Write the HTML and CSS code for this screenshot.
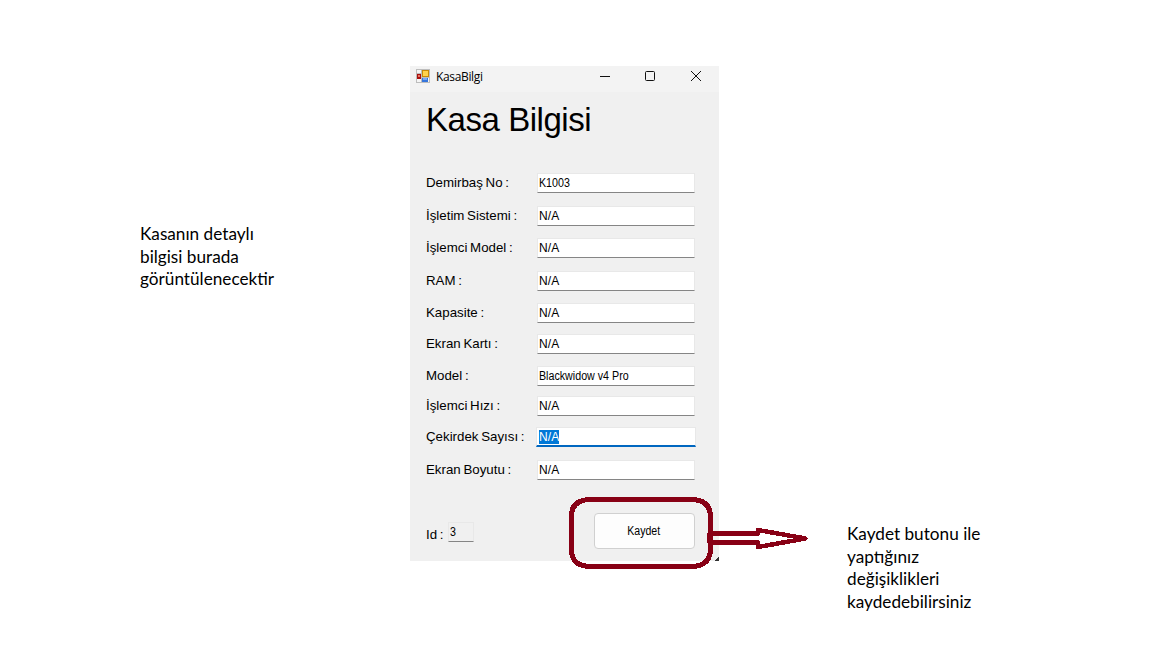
FILE: index.html
```html
<!DOCTYPE html>
<html lang="tr">
<head>
<meta charset="utf-8">
<title>KasaBilgi</title>
<link rel="stylesheet" href="styles.css">
</head>
<body>
<main class="page">
  <p class="note note-left">Kasanın detaylı<br>bilgisi burada<br>görüntülenecektir</p>
  <section class="window">
    <header class="titlebar">
      <svg class="app-icon" width="14" height="14" viewBox="0 0 14 14">
        <rect width="14" height="14" fill="#bdbdbd"/>
        <path d="M1 1h4v3H1zM1 10h4v3H1zM12 9h1v4h-1z" fill="#f5f5f5"/>
        <rect x="1" y="5" width="4" height="5" fill="#a80f0c"/><rect x="2" y="6" width="2" height="2" fill="#ec7464"/>
        <rect x="6" y="1" width="7" height="7" fill="#c88a08"/><rect x="7" y="2" width="5" height="5" fill="#ffd24c"/>
        <rect x="6" y="9" width="6" height="4" fill="#3676dc"/><rect x="7" y="9" width="4" height="2" fill="#79a9f5"/>
      </svg>
      <span class="title">KasaBilgi</span>
      <svg class="controls" width="103" height="12" viewBox="0 0 103 12" fill="none" stroke="#111">
        <path d="M0 6.5h10"/>
        <rect x="45.5" y="1.5" width="9" height="9" rx="1"/>
        <path d="M91 1l10 10M101 1L91 11"/>
      </svg>
    </header>
    <h1 class="heading">Kasa Bilgisi</h1>
    <div class="form">
      <label class="label">Demirbaş No :</label><div class="field"><span>K1003</span></div>
      <label class="label">İşletim Sistemi :</label><div class="field"><span class="na">N/A</span></div>
      <label class="label">İşlemci Model :</label><div class="field"><span class="na">N/A</span></div>
      <label class="label">RAM :</label><div class="field"><span class="na">N/A</span></div>
      <label class="label">Kapasite :</label><div class="field"><span class="na">N/A</span></div>
      <label class="label">Ekran Kartı :</label><div class="field"><span class="na">N/A</span></div>
      <label class="label">Model :</label><div class="field"><span class="long">Blackwidow v4 Pro</span></div>
      <label class="label">İşlemci Hızı :</label><div class="field"><span class="na">N/A</span></div>
      <label class="label">Çekirdek Sayısı :</label><div class="field focused"><span class="na selected">N/A</span></div>
      <label class="label">Ekran Boyutu :</label><div class="field"><span class="na">N/A</span></div>
    </div>
    <footer class="footer">
      <label class="label id-label">Id :</label>
      <div class="field id-field"><span>3</span></div>
      <button class="save"><span>Kaydet</span></button>
    </footer>
  </section>
  <p class="note note-right">Kaydet butonu ile<br>yaptığınız<br>değişiklikleri<br>kaydedebilirsiniz</p>
  <svg class="callout" width="244" height="76" viewBox="566 494 244 76" fill="none" stroke="#880015" stroke-width="5" stroke-linejoin="round" shape-rendering="crispEdges">
    <path d="M719 556v5h-4z" fill="#333" stroke="none"/>
    <path d="M590 499.500H692Q710.500 500 710.500 517V548Q710.500 566 692 566.500H590Q571.500 566 571.500 550V516Q571.500 500 590 499.500Z"/>
    <path d="M709.500 533.500H758V530L805.500 538.500L758 547V542.500H709.500Z" stroke-width="4.500"/>
  </svg>
</main>
</body>
</html>
```
FILE: styles.css
```css
* { box-sizing: border-box; }
body { margin: 0; background: #fff; }
.page {
  position: relative;
  display: grid;
  grid-template-columns: 140px 270px 309px 128px 1fr;
  width: 1152px;
  height: 648px;
  overflow: hidden;
  align-items: start;
}
.note {
  grid-row: 1;
  margin: 0;
  font: 17.200px/22.700px Lato, "Open Sans", sans-serif;
  color: #000;
  white-space: nowrap;
}
.note-left { grid-column: 2; margin-top: 223px; }
.note-right { grid-column: 5; margin-top: 523px; }
.window {
  grid-column: 3;
  grid-row: 1;
  margin-top: 66px;
  height: 495px;
  background: #f0f0f0;
  font-family: "Liberation Sans", Arial, sans-serif;
  color: #000;
}
.titlebar {
  display: flex;
  height: 26px;
  padding: 3px 16px 0 6px;
  background: #f3f3f3;
}
.title {
  margin-left: 6px;
  font: 12px/16px "Open Sans", sans-serif;
  letter-spacing: -0.350px;
}
.controls { margin: 1px 0 0 auto; }
.heading {
  margin: 0;
  padding: 9px 0 0 16px;
  height: 80px;
  font-size: 33px;
  line-height: 38px;
  font-weight: 400;
  letter-spacing: -0.450px;
  white-space: nowrap;
}
.form {
  display: grid;
  grid-template-columns: 110px 160px;
  grid-template-rows: 33px 32px 33px 32px 31px 32px 30px 31px 33px 20px;
  padding: 1px 0 0 16px;
  align-items: start;
}
.label {
  font-size: 13.300px;
  line-height: 20px;
  word-spacing: -1px;
  white-space: nowrap;
}
.field {
  width: 158px;
  height: 20px;
  margin-left: 1px;
  padding-left: 1px;
  background: #fff;
  border: 1px solid #e8e8e8;
  border-bottom-color: #858585;
  font-size: 12px;
  line-height: 18px;
  white-space: nowrap;
}
.field span {
  display: inline-block;
  transform: scaleX(0.890);
  transform-origin: left;
}
.field .na { transform: none; letter-spacing: 0.100px; }
.focused {
  width: 160px;
  margin-left: 0;
  padding-left: 2px;
  border-bottom: 2px solid #0067c0;
}
.field .selected {
  height: 14px;
  margin-top: 2px;
  line-height: 14px;
  background: #0078d7;
  color: #fff;
  vertical-align: top;
}
.footer {
  display: flex;
  align-items: flex-start;
  padding: 33px 24px 0 16px;
}
.id-label { margin-top: 12px; width: 21px; }
.id-field { width: 26px; margin-top: 9px; background: #f0f0f0; }
.save {
  width: 101px;
  height: 36px;
  margin-left: auto;
  padding: 0 2px 0 0;
  border: 1px solid #d0d0d0;
  border-radius: 4px;
  background: #fdfdfd;
  color: #000;
  font: 12px/16px "Liberation Sans", Arial, sans-serif;
}
.save span { display: inline-block; transform: scaleX(0.880); }
.callout { position: absolute; left: 566px; top: 494px; }
```
